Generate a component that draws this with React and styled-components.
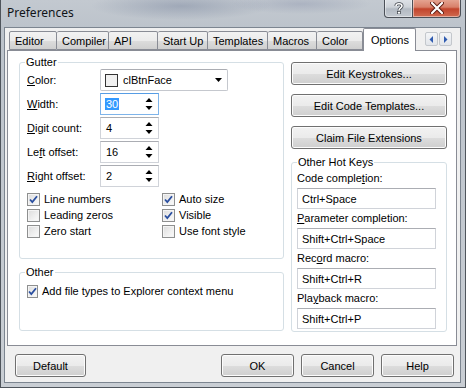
import React from 'react';
import styled, { createGlobalStyle } from 'styled-components';

const GlobalStyle = createGlobalStyle`
  html, body {
    margin: 0;
    padding: 0;
    background: #ffffff;
  }
  body {
    font-family: 'Liberation Sans', Arial, sans-serif;
    font-size: 11px;
    color: #000000;
  }
`;

const Window = styled.div`
  width: 466px;
  height: 388px;
  box-sizing: border-box;
  display: flex;
  flex-direction: column;
  padding: 0 4px 4px 3px;
  border: 1px solid #4f555c;
  border-top: none;
  background:
    radial-gradient(ellipse 90px 14px at 180px 6px, rgba(96, 110, 140, 0.35), transparent),
    radial-gradient(ellipse 70px 10px at 300px 4px, rgba(120, 130, 160, 0.3), transparent),
    linear-gradient(180deg, #c3c9d0 0%, #bcc3cb 30px, #c9ced4 100%);
  overflow: hidden;
`;

const TitleBar = styled.div`
  height: 27px;
  flex: 0 0 27px;
  display: flex;
  align-items: flex-start;
  justify-content: space-between;
`;

const Title = styled.span`
  font-family: 'Noto Sans', 'Open Sans', sans-serif;
  font-size: 12px;
  line-height: 12px;
  margin: 7px 0 0 3px;
  color: #101418;
`;

const CaptionButtons = styled.div`
  display: flex;
  margin-top: -1px;
`;

const CaptionButton = styled.div`
  width: ${p => p.$w}px;
  height: 19px;
  box-sizing: border-box;
  display: flex;
  align-items: center;
  justify-content: center;
  border: 1px solid #4b5058;
  border-top: none;
  border-left: ${p => (p.$first ? '1px solid #4b5058' : 'none')};
  border-radius: ${p => (p.$first ? '0 0 0 4px' : '0 0 4px 0')};
  background: ${p => (p.$close
    ? 'linear-gradient(180deg, #e6a896 0%, #d8806a 45%, #c2442c 55%, #d06a50 100%)'
    : 'linear-gradient(180deg, #dfe3e8 0%, #cdd2d8 45%, #b3bac3 55%, #c4cad1 100%)')};
  box-shadow: inset 0 0 0 1px rgba(255, 255, 255, 0.45);
`;

const Client = styled.div`
  flex: 1;
  display: flex;
  flex-direction: column;
  background: #f0f0f0;
  border: 1px solid #7c8590;
`;

const TabStrip = styled.div`
  height: 22px;
  flex: 0 0 22px;
  display: flex;
  align-items: flex-end;
  padding: 0 8px 0 4px;
  position: relative;
  z-index: 1;
`;

const Tab = styled.div`
  width: ${p => p.$w}px;
  height: ${p => (p.$active ? 23 : 19)}px;
  box-sizing: border-box;
  margin-bottom: ${p => (p.$active ? -1 : 0)}px;
  padding: ${p => (p.$active ? '4px 0 0 7px' : '2px 0 0 5px')};
  border: 1px solid #898c95;
  border-bottom: ${p => (p.$active ? 'none' : '1px solid #898c95')};
  border-left: ${p => (p.$first || p.$active ? '1px solid #898c95' : 'none')};
  border-radius: 2px 2px 0 0;
  background: ${p => (p.$active
    ? '#ffffff'
    : 'linear-gradient(180deg, #f2f2f2 0%, #ebebeb 50%, #dddddd 51%, #cfcfcf 100%)')};
  line-height: 14px;
  white-space: nowrap;
`;

const ScrollArrows = styled.div`
  margin-left: auto;
  align-self: flex-start;
  margin-top: 4px;
  display: flex;
  gap: 1px;
`;

const ArrowButton = styled.div`
  width: 13px;
  height: 14px;
  box-sizing: border-box;
  border: 1px solid #c3c7cc;
  border-radius: 2px;
  background: linear-gradient(180deg, #f4f5f7, #e2e5ea);
  display: flex;
  align-items: center;
  justify-content: center;
`;

const Panel = styled.div`
  flex: 0 0 296px;
  margin: 0 3px 0 2px;
  box-sizing: border-box;
  border: 1px solid #898c95;
  background: #ffffff;
  display: flex;
  gap: 7px;
  padding: 5px 0 0 11px;
`;

const Column = styled.div`
  width: ${p => p.$w}px;
  display: flex;
  flex-direction: column;
  padding-top: ${p => p.$top || 0}px;
`;

const Group = styled.fieldset`
  margin: ${p => p.$mt || 0}px 0 0 0;
  padding: 0 ${p => p.$pr || 7}px ${p => p.$pb || 0}px ${p => p.$pl || 7}px;
  border: 1px solid #d5dfe5;
  border-radius: 3px;
  min-width: 0;
`;

const Legend = styled.legend`
  padding: 0 1px;
  margin-left: ${p => p.$ml || 0}px;
  line-height: 13px;
`;

const FormRow = styled.div`
  display: flex;
  align-items: center;
  height: 22px;
  margin-bottom: 2px;
`;

const Label = styled.span`
  width: 73px;
  flex: 0 0 73px;
`;

const Key = styled.span`
  text-decoration: underline;
`;

const Combo = styled.div`
  width: 128px;
  height: 22px;
  box-sizing: border-box;
  border: 1px solid #c5c8ce;
  border-top-color: #abadb3;
  border-radius: 2px;
  display: flex;
  align-items: center;
  padding: 0 5px 0 4px;
`;

const Swatch = styled.span`
  width: 13px;
  height: 13px;
  box-sizing: border-box;
  border: 1px solid #333333;
  background: #f0f0f0;
  margin-right: 5px;
`;

const ComboText = styled.span`
  flex: 1;
`;

const Spin = styled.div`
  width: 59px;
  height: 22px;
  box-sizing: border-box;
  border: 1px solid ${p => (p.$focus ? '#7eb4ea' : '#d0d3d9')};
  border-top-color: ${p => (p.$focus ? '#569de5' : '#abadb3')};
  display: flex;
  align-items: center;
  padding: 0 5px 0 5px;
`;

const SpinText = styled.span`
  flex: 1;
`;

const Selected = styled.span`
  background: #3399ff;
  color: #ffffff;
  padding: 0 1px;
  margin-left: -1px;
`;

const CheckGrid = styled.div`
  display: grid;
  grid-template-columns: 135px 1fr;
  grid-auto-rows: 16px;
  margin-top: 4px;
`;

const CheckItem = styled.div`
  display: flex;
  align-items: center;
  gap: 4px;
  white-space: nowrap;
`;

const Box = styled.span`
  width: 13px;
  height: 13px;
  box-sizing: border-box;
  border: 1px solid #8e8f8f;
  background: linear-gradient(135deg, #dcdcdc 0%, #f0f0f0 60%, #fbfbfb 100%);
  box-shadow: inset 0 0 0 1px #f4f4f4;
  display: flex;
  align-items: center;
  justify-content: center;
`;

const Button = styled.div`
  width: ${p => p.$w || 156}px;
  height: 23px;
  box-sizing: border-box;
  border: 1px solid #707070;
  border-radius: 3px;
  background: linear-gradient(180deg, #f2f2f2 0%, #ebebeb 50%, #dddddd 51%, #cfcfcf 100%);
  box-shadow: inset 0 0 0 1px #fcfcfc;
  display: flex;
  align-items: center;
  justify-content: center;
`;

const ButtonStack = styled.div`
  display: flex;
  flex-direction: column;
  gap: 9px;
`;

const FieldLabel = styled.div`
  line-height: 13px;
  margin-top: 3px;
`;

const Field = styled.div`
  width: 139px;
  height: 21px;
  box-sizing: border-box;
  margin-top: 3px;
  border: 1px solid #d0d3d9;
  border-top-color: #abadb3;
  display: flex;
  align-items: center;
  padding-left: 4px;
`;

const Footer = styled.div`
  flex: 1;
  display: flex;
  align-items: flex-start;
  gap: 7px;
  padding: 8px 6px 0 10px;
`;

const Spacer = styled.div`
  flex: 1;
`;

const Check = ({ on }) => (
  <Box>
    {on && (
      <svg width="9" height="9" viewBox="0 0 9 9">
        <path d="M1 4.5 L3.3 7 L8 1.2" fill="none" stroke="#2a4fa0" strokeWidth="1.8" />
      </svg>
    )}
  </Box>
);

const SpinArrows = () => (
  <svg width="8" height="14" viewBox="0 0 8 14">
    <path d="M4 1 L7.5 5 L0.5 5 Z" fill="#000" />
    <path d="M0.5 9 L7.5 9 L4 13 Z" fill="#000" />
  </svg>
);

const tabs = [
  ['Editor', 48],
  ['Compiler', 52],
  ['API', 49],
  ['Start Up', 50],
  ['Templates', 60],
  ['Macros', 49],
  ['Color', 46],
  ['Options', 53],
];

const spins = [
  [<><Key>D</Key>igit count:</>, '4'],
  [<>Le<Key>f</Key>t offset:</>, '16'],
  [<><Key>R</Key>ight offset:</>, '2'],
];

const checks = [
  ['Line numbers', true],
  ['Auto size', true],
  ['Leading zeros', false],
  ['Visible', true],
  ['Zero start', false],
  ['Use font style', false],
];

const hotKeys = [
  [<>Code comple<Key>t</Key>ion:</>, 'Ctrl+Space'],
  [<><Key>P</Key>arameter completion:</>, 'Shift+Ctrl+Space'],
  [<>Rec<Key>o</Key>rd macro:</>, 'Shift+Ctrl+R'],
  [<>Pla<Key>y</Key>back macro:</>, 'Shift+Ctrl+P'],
];

const App = () => (
  <>
    <GlobalStyle />
    <Window>
      <TitleBar>
        <Title>Preferences</Title>
        <CaptionButtons>
          <CaptionButton $w={29} $first>
            <svg width="10" height="12" viewBox="0 0 10 12">
              <path d="M2 4 C2 1 8 1 8 4 C8 6 5 6 5 8.5" fill="none" stroke="#3b4048" strokeWidth="3" />
              <path d="M2 4 C2 1 8 1 8 4 C8 6 5 6 5 8.5" fill="none" stroke="#ffffff" strokeWidth="1.6" />
              <rect x="3.6" y="9.5" width="2.8" height="2.5" fill="#ffffff" stroke="#3b4048" strokeWidth="0.7" />
            </svg>
          </CaptionButton>
          <CaptionButton $w={48} $close>
            <svg width="14" height="12" viewBox="0 0 14 12">
              <path d="M2 1 L12 11 M12 1 L2 11" stroke="#5a1a10" strokeWidth="4" strokeLinecap="round" />
              <path d="M2 1 L12 11 M12 1 L2 11" stroke="#ffffff" strokeWidth="2.2" strokeLinecap="round" />
            </svg>
          </CaptionButton>
        </CaptionButtons>
      </TitleBar>
      <Client>
        <TabStrip>
          {tabs.map(([name, w], i) => (
            <Tab key={name} $w={w} $first={i === 0} $active={name === 'Options'}>
              {name}
            </Tab>
          ))}
          <ScrollArrows>
            <ArrowButton>
              <svg width="5" height="7" viewBox="0 0 5 7"><path d="M4 0 L0.5 3.5 L4 7 Z" fill="#2f5bb0" /></svg>
            </ArrowButton>
            <ArrowButton>
              <svg width="5" height="7" viewBox="0 0 5 7"><path d="M1 0 L4.5 3.5 L1 7 Z" fill="#2f5bb0" /></svg>
            </ArrowButton>
          </ScrollArrows>
        </TabStrip>
        <Panel>
          <Column $w={265}>
            <Group $pb={19}>
              <Legend $ml={-2}>Gutter</Legend>
              <FormRow>
                <Label><Key>C</Key>olor:</Label>
                <Combo>
                  <Swatch />
                  <ComboText>clBtnFace</ComboText>
                  <svg width="7" height="4" viewBox="0 0 7 4"><path d="M0 0 L7 0 L3.5 4 Z" fill="#000" /></svg>
                </Combo>
              </FormRow>
              <FormRow>
                <Label><Key>W</Key>idth:</Label>
                <Spin $focus>
                  <SpinText><Selected>30</Selected></SpinText>
                  <SpinArrows />
                </Spin>
              </FormRow>
              {spins.map(([label, value], i) => (
                <FormRow key={i}>
                  <Label>{label}</Label>
                  <Spin>
                    <SpinText>{value}</SpinText>
                    <SpinArrows />
                  </Spin>
                </FormRow>
              ))}
              <CheckGrid>
                {checks.map(([label, on]) => (
                  <CheckItem key={label}>
                    <Check on={on} />
                    {label}
                  </CheckItem>
                ))}
              </CheckGrid>
            </Group>
            <Group $mt={7} $pb={31}>
              <Legend $ml={-2}>Other</Legend>
              <CheckGrid>
                <CheckItem>
                  <Check on />
                  Add file types to Explorer context menu
                </CheckItem>
              </CheckGrid>
            </Group>
          </Column>
          <Column $w={156} $top={6}>
            <ButtonStack>
              <Button>Edit Keystrokes...</Button>
              <Button>Edit Code Templates...</Button>
              <Button>Claim File Extensions</Button>
            </ButtonStack>
            <Group $mt={7} $pl={5} $pr={10} $pb={2}>
              <Legend>Other Hot Keys</Legend>
              {hotKeys.map(([label, value], i) => (
                <React.Fragment key={i}>
                  <FieldLabel>{label}</FieldLabel>
                  <Field>{value}</Field>
                </React.Fragment>
              ))}
            </Group>
          </Column>
        </Panel>
        <Footer>
          <Button $w={71}>Default</Button>
          <Spacer />
          <Button $w={73}>OK</Button>
          <Button $w={73}>Cancel</Button>
          <Button $w={73}>Help</Button>
        </Footer>
      </Client>
    </Window>
  </>
);

export default App;
